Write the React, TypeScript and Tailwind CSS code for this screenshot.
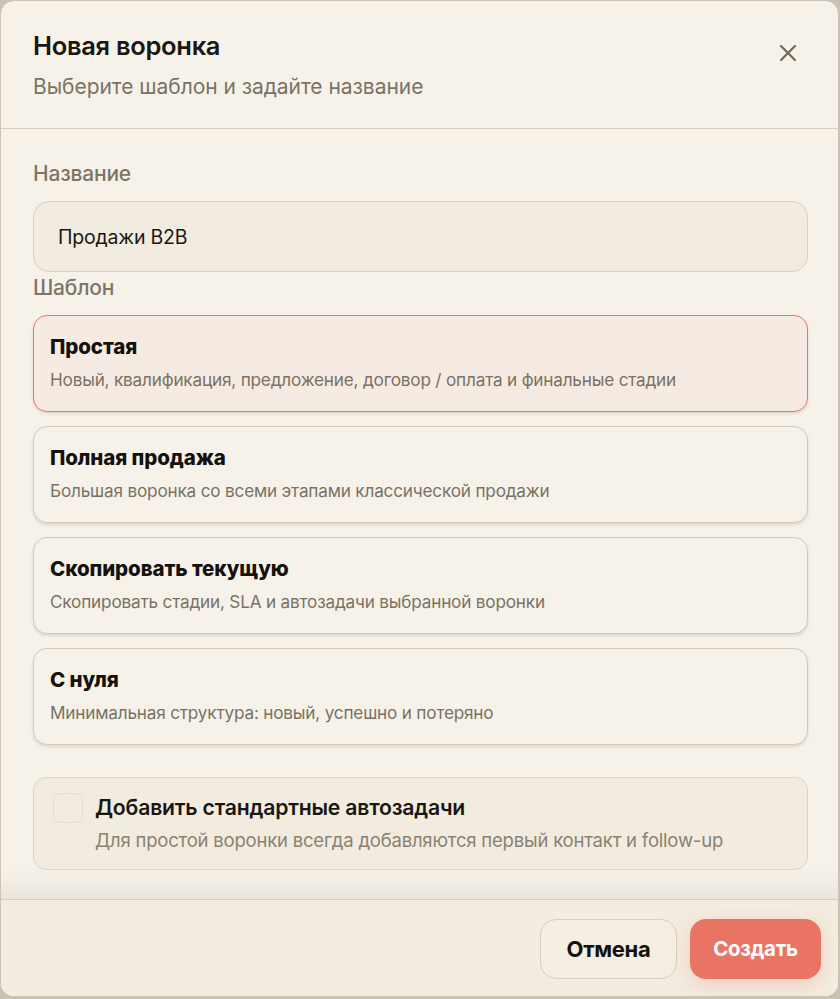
import React, { useState } from "react";

const TEMPLATES = [
  {
    id: "simple",
    title: "Простая",
    desc: "Новый, квалификация, предложение, договор / оплата и финальные стадии",
  },
  {
    id: "full",
    title: "Полная продажа",
    desc: "Большая воронка со всеми этапами классической продажи",
  },
  {
    id: "copy",
    title: "Скопировать текущую",
    desc: "Скопировать стадии, SLA и автозадачи выбранной воронки",
  },
  {
    id: "empty",
    title: "С нуля",
    desc: "Минимальная структура: новый, успешно и потеряно",
  },
];

const CloseIcon = () => (
  <svg width="20" height="20" viewBox="0 0 20 20" fill="none" stroke="currentColor" strokeWidth="2.2" strokeLinecap="round">
    <path d="M3 3L17 17M17 3L3 17" />
  </svg>
);

export default function App() {
  const [name, setName] = useState("Продажи B2B");
  const [selected, setSelected] = useState("simple");
  const [autoTasks, setAutoTasks] = useState(false);

  return (
    <div className="h-[999px] w-[840px] bg-[#c9c1b3] font-['Inter','Noto_Sans',sans-serif]">
      <div className="flex h-[997px] w-[839px] flex-col overflow-hidden rounded-[14px] border border-[#cdc4b4] bg-[#f6f2ea]">
        {/* Header */}
        <div className="flex h-[128px] shrink-0 items-start justify-between border-b border-[#d6cdbc] pl-8 pr-[30px] pt-[29px]">
          <div>
            <h2 className="text-[25.5px] font-semibold leading-[32px] tracking-[-0.3px] text-[#1a1713]">Новая воронка</h2>
            <p className="mt-[11px] text-[21px] leading-[28px] tracking-[-0.05px] text-[#7a7264]">
              Выберите шаблон и задайте название
            </p>
          </div>
          <button type="button" className="mt-[13px] mr-[10px] text-[#6f6859]" aria-label="Закрыть">
            <CloseIcon />
          </button>
        </div>

        {/* Body */}
        <div className="relative flex-1 pl-8 pr-[30px] pt-[31px]">
          <label className="block text-[21px] font-medium leading-[28px] tracking-[-0.2px] text-[#7d7565]">Название</label>
          <input
            value={name}
            onChange={(e) => setName(e.target.value)}
            className="mt-[13px] block h-[71px] w-full rounded-[16px] border border-[#d9d0bf] bg-[#f2ebdf] px-6 text-[19.5px] tracking-[-0.2px] text-[#1a1713] outline-none"
          />
          <div className="mt-[2px] text-[21px] font-medium leading-[28px] tracking-[-0.2px] text-[#7d7565]">Шаблон</div>

          <div className="mt-[13px] flex flex-col gap-[14px]">
            {TEMPLATES.map((t) => {
              const active = t.id === selected;
              return (
                <button
                  key={t.id}
                  type="button"
                  onClick={() => setSelected(t.id)}
                  className={`flex h-[97px] w-full flex-col items-start rounded-[14px] border px-4 pt-[18px] text-left shadow-[0_2px_3px_rgba(120,105,80,0.18)] ${
                    active ? "border-[#e8776a] bg-[#f5ebe2]" : "border-[#d3cab8] bg-[#f6f2ea]"
                  }`}
                >
                  <span className="text-[20.5px] font-extrabold leading-[26px] tracking-[-0.1px] text-[#15120e]">{t.title}</span>
                  <span className="mt-[8px] text-[17.2px] leading-[24px] tracking-[-0.2px] text-[#7a7264]">{t.desc}</span>
                </button>
              );
            })}
          </div>

          <label className="mt-[32px] flex h-[93px] cursor-pointer items-start gap-3 rounded-[13px] border border-[#ddd4c3] bg-[#f2ebdf] px-[19px] pt-[14px]">
            <span
              onClick={() => setAutoTasks((v) => !v)}
              className={`mt-[1px] h-[30px] w-[30px] shrink-0 rounded-[7px] border border-[#e5ddcd] ${autoTasks ? "bg-[#e97464]" : "bg-[#f2ebdf]"}`}
            />
            <span className="flex flex-col">
              <span className="text-[21.2px] font-semibold leading-[30px] tracking-[-0.2px] text-[#1a1713]">Добавить стандартные автозадачи</span>
              <span className="mt-[5px] text-[18.5px] leading-[26px] tracking-[-0.2px] text-[#8a8273]">
                Для простой воронки всегда добавляются первый контакт и follow-up
              </span>
            </span>
          </label>

          <div className="pointer-events-none absolute bottom-0 left-0 right-0 h-[34px] bg-gradient-to-b from-transparent to-[#ebe6dd]" />
        </div>

        {/* Footer */}
        <div className="flex h-[97px] shrink-0 items-start justify-end gap-[13px] border-t border-[#d6cdbc] bg-[#f3ece0] pr-[17px] pt-[19px]">
          <button type="button" className="h-[60px] w-[137px] rounded-[16px] border border-[#d8cfbe] bg-[#f4eee3] text-[22px] font-bold tracking-[-0.3px] text-[#15120e]">
            Отмена
          </button>
          <button type="button" className="h-[60px] w-[131px] rounded-[16px] bg-[#e97464] text-[20.5px] font-bold tracking-[-0.3px] text-white shadow-[0_6px_18px_rgba(233,116,100,0.25)]">
            Создать
          </button>
        </div>
      </div>
    </div>
  );
}
